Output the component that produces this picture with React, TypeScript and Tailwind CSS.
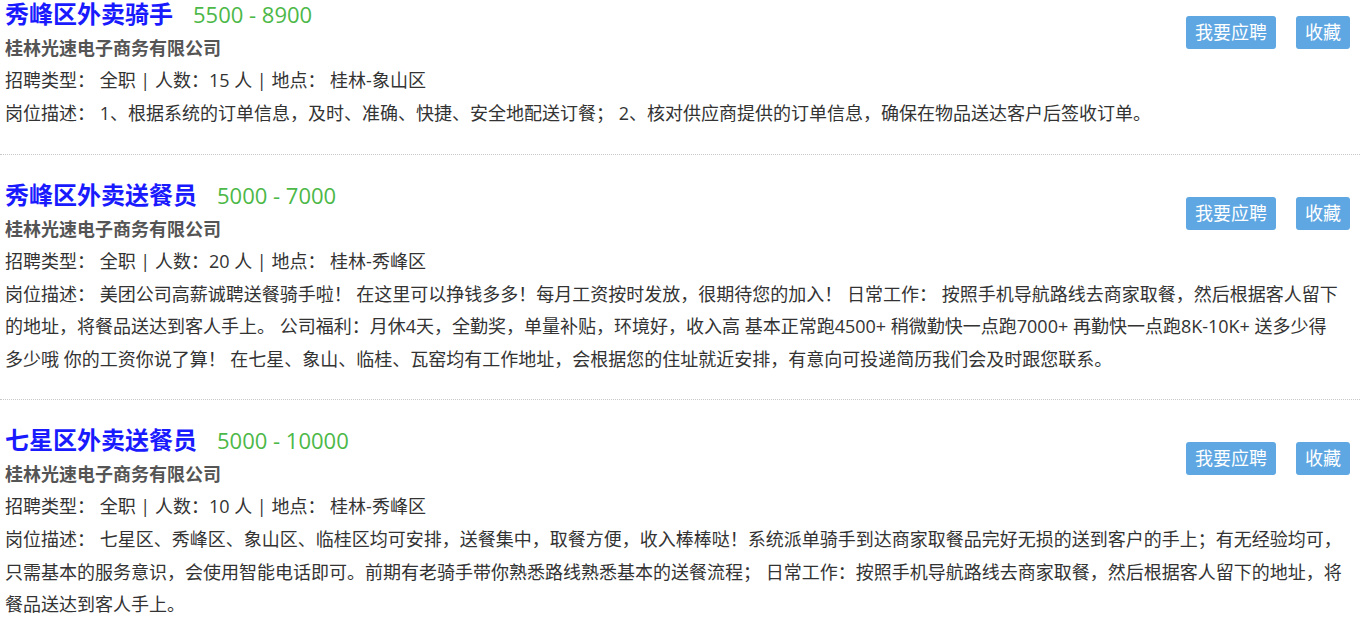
import React from "react";

type Job = {
  title: string;
  salary: string;
  count: string;
  place: string;
  desc: string;
};

const jobs: Job[] = [
  {
    title: "秀峰区外卖骑手",
    salary: "5500 - 8900",
    count: "15",
    place: "桂林-象山区",
    desc: "1、根据系统的订单信息，及时、准确、快捷、安全地配送订餐； 2、核对供应商提供的订单信息，确保在物品送达客户后签收订单。",
  },
  {
    title: "秀峰区外卖送餐员",
    salary: "5000 - 7000",
    count: "20",
    place: "桂林-秀峰区",
    desc: "美团公司高薪诚聘送餐骑手啦！ 在这里可以挣钱多多！每月工资按时发放，很期待您的加入！ 日常工作： 按照手机导航路线去商家取餐，然后根据客人留下的地址，将餐品送达到客人手上。 公司福利：月休4天，全勤奖，单量补贴，环境好，收入高 基本正常跑4500+ 稍微勤快一点跑7000+ 再勤快一点跑8K-10K+ 送多少得多少哦 你的工资你说了算！ 在七星、象山、临桂、瓦窑均有工作地址，会根据您的住址就近安排，有意向可投递简历我们会及时跟您联系。",
  },
  {
    title: "七星区外卖送餐员",
    salary: "5000 - 10000",
    count: "10",
    place: "桂林-秀峰区",
    desc: "七星区、秀峰区、象山区、临桂区均可安排，送餐集中，取餐方便，收入棒棒哒！系统派单骑手到达商家取餐品完好无损的送到客户的手上；有无经验均可，只需基本的服务意识，会使用智能电话即可。前期有老骑手带你熟悉路线熟悉基本的送餐流程； 日常工作：按照手机导航路线去商家取餐，然后根据客人留下的地址，将餐品送达到客人手上。",
  },
];

function JobItem({ job, first }: { job: Job; first: boolean }) {
  return (
    <div
      className={
        "pl-[5px] pr-[10px] pb-[24px] border-b border-dotted border-[#c8c8c8] " +
        (first ? "pt-0" : "pt-[26px]")
      }
    >
      <div className="float-right mt-[16px] flex gap-[20px]">
        <button className="h-[33px] px-[9px] rounded-[3px] bg-[#5ea7e2] text-white text-[18px] leading-[33px]">
          我要应聘
        </button>
        <button className="h-[33px] px-[9px] rounded-[3px] bg-[#5ea7e2] text-white text-[18px] leading-[33px]">
          收藏
        </button>
      </div>
      <div className="flex items-baseline h-[28px] leading-[28px]">
        <span className="text-[24px] font-bold text-[#1a1aff]">{job.title}</span>
        <span className="ml-[20px] text-[22px] text-[#4cb848]">{job.salary}</span>
      </div>
      <div className="mt-[4px] text-[18px] leading-[32px] font-bold text-[#555]">
        桂林光速电子商务有限公司
      </div>
      <div className="text-[18px] leading-[33px] text-[#333]">
        招聘类型： 全职 | 人数：{job.count} 人 | 地点： {job.place}
      </div>
      <div className="pr-[6px] text-[18px] leading-[32.5px] text-[#333]">
        岗位描述： {job.desc}
      </div>
    </div>
  );
}

export default function App() {
  return (
    <div className="w-[1360px] h-[623px] overflow-hidden bg-white font-['Open_Sans','Noto_Sans_CJK_SC',sans-serif]">
      {jobs.map((j, i) => (
        <JobItem key={i} job={j} first={i === 0} />
      ))}
    </div>
  );
}
